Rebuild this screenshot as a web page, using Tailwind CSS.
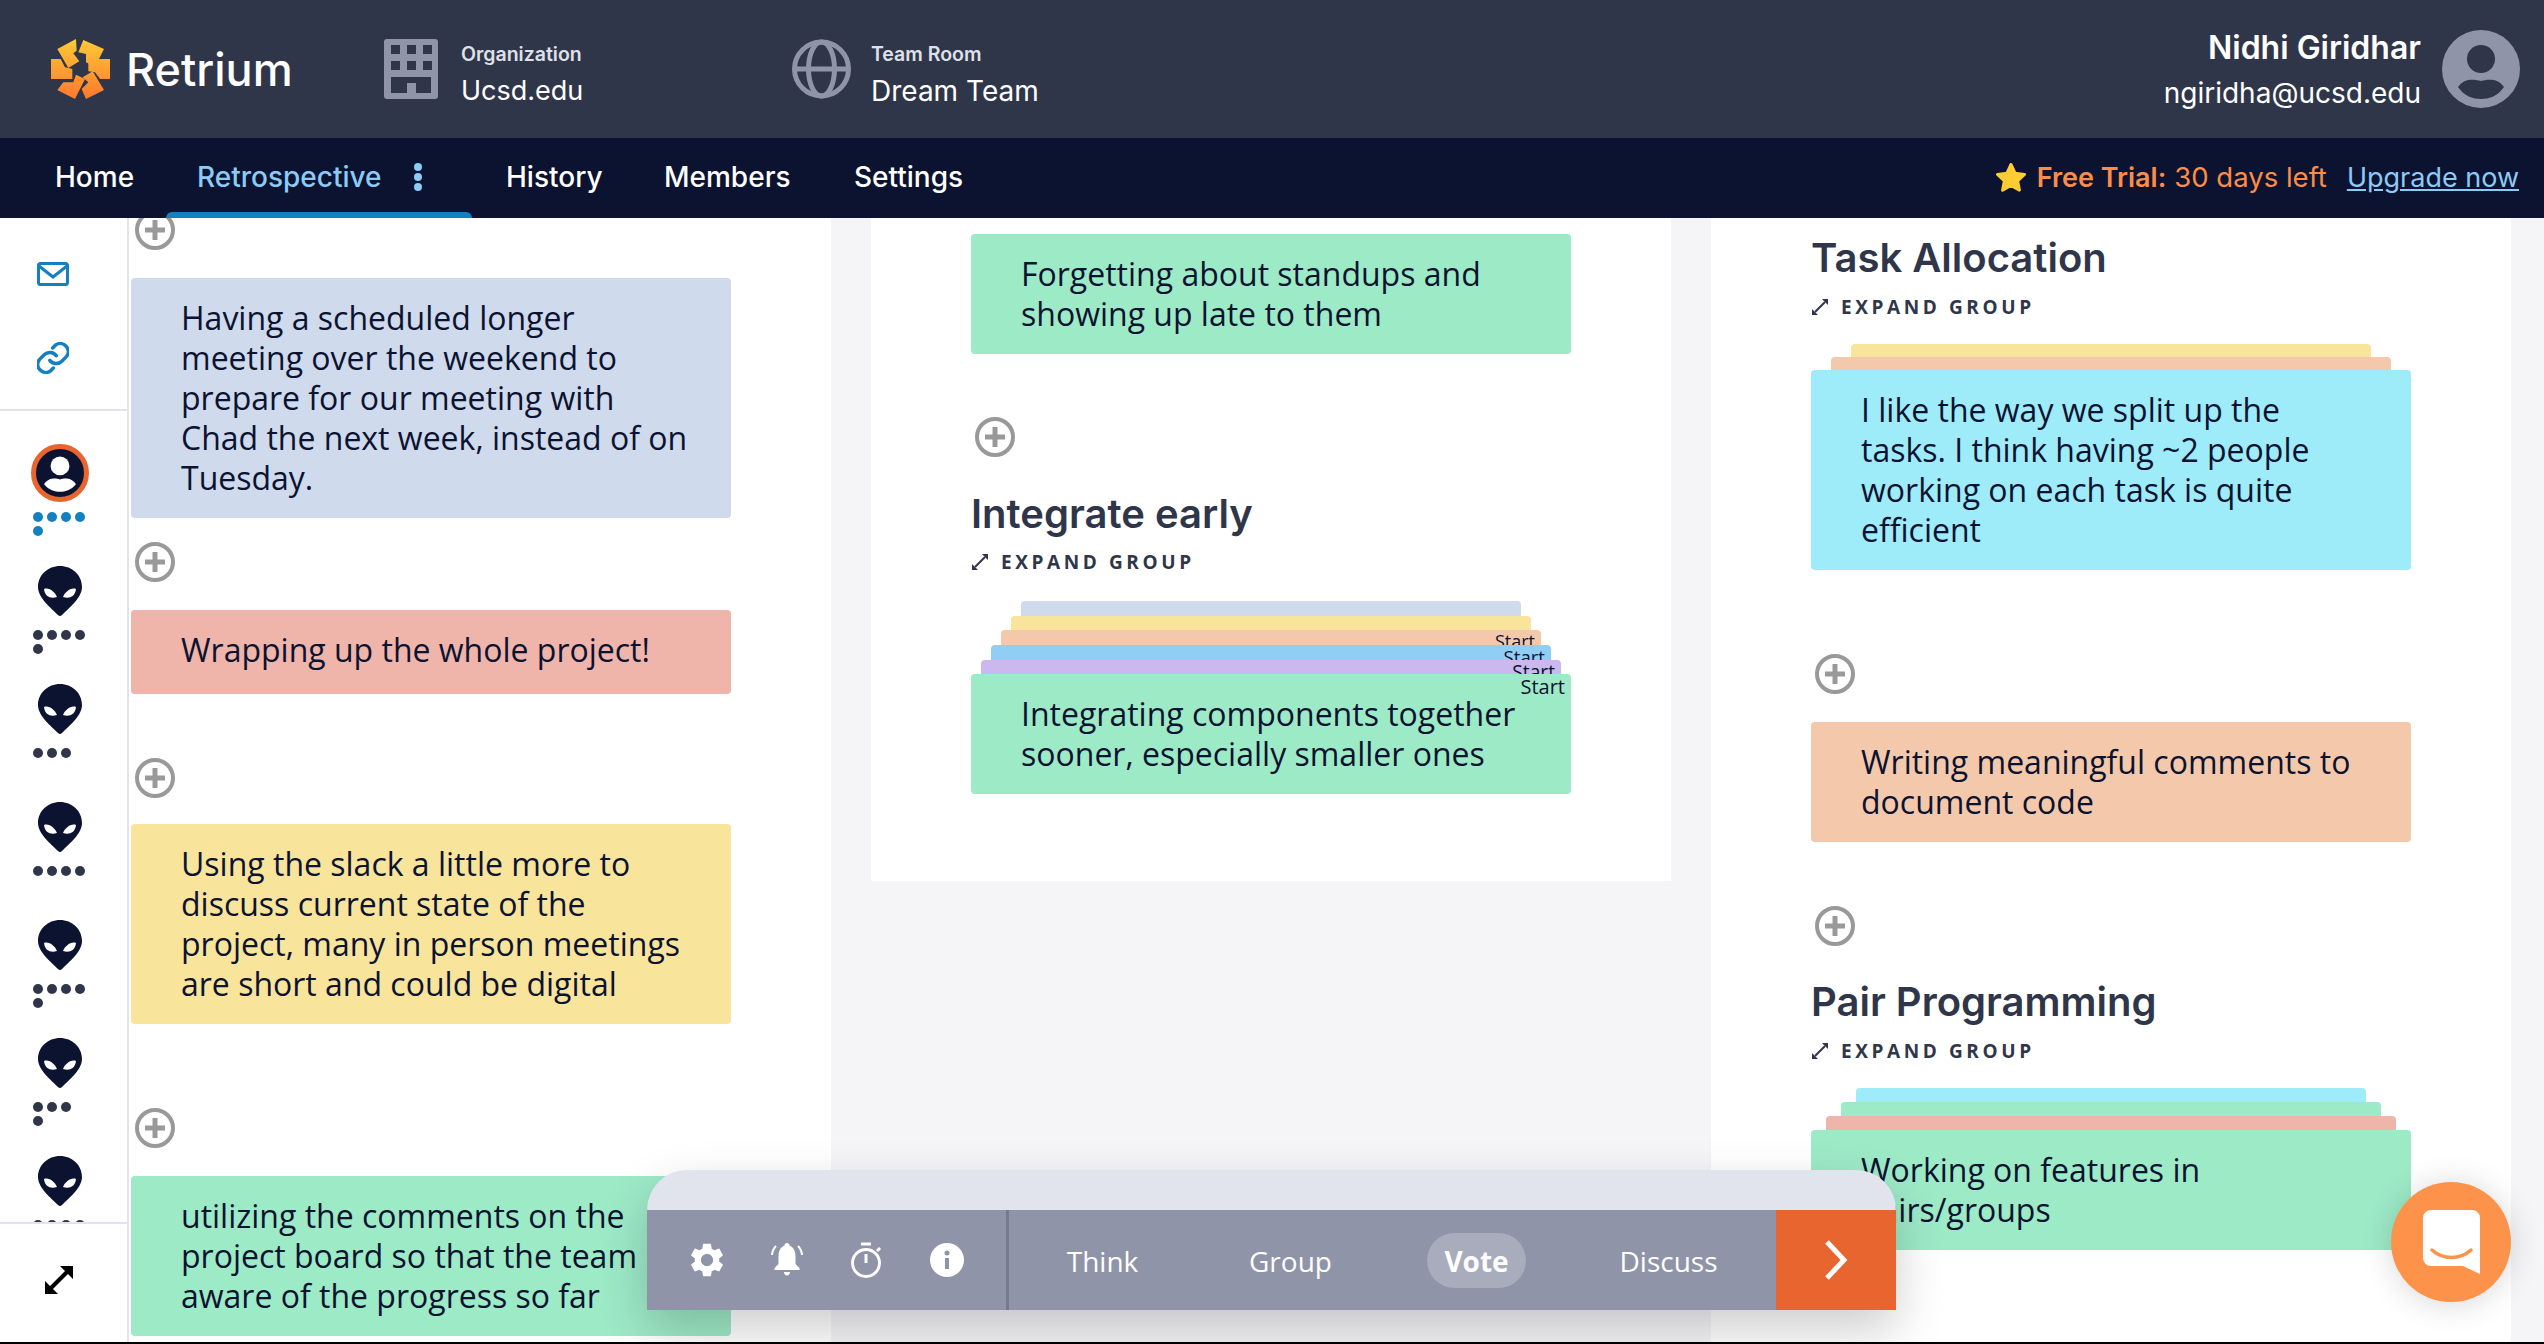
<!DOCTYPE html>
<html lang="en">
<head>
  <meta charset="UTF-8"/>
  <title>Retrium</title>
  <script src="https://cdn.jsdelivr.net/npm/@tailwindcss/browser@4"></script>
</head>
<body class="relative h-screen overflow-hidden bg-[#f5f5f8] font-['Open_Sans',sans-serif] text-[#0c1330]">

  <svg class="hidden">
    <symbol id="alien" viewBox="0 0 44 50">
      <path fill="#0c1330" d="M22 0C34 0 44 9 44 21C44 32 31 42 24 49Q22 51 20 49C13 42 0 32 0 21C0 9 10 0 22 0Z"/>
      <path fill="#fff" d="M6 23C11 21 17 26 19 31C13 33 7 31 6 23ZM38 23C33 21 27 26 25 31C31 33 37 31 38 23Z"/>
    </symbol>
    <symbol id="plus" viewBox="0 0 40 40">
      <circle cx="20" cy="20" r="18" fill="none" stroke="#999" stroke-width="4"/>
      <path fill="none" stroke="#999" stroke-width="5" d="M10 20H30M20 10V30"/>
    </symbol>
    <symbol id="expand" viewBox="0 0 18 18">
      <path fill="none" stroke="#30364a" stroke-width="2" d="M4 14L14 4"/>
      <path fill="#30364a" d="M11 1H17V7ZM1 11V17H7Z"/>
    </symbol>
  </svg>

  <!-- Top bar -->
  <header class="flex h-[138px] items-center bg-[#30364a] pl-[51px] pr-[24px] text-white">
    <div class="flex w-[333px] items-center gap-[16px]">
      <svg class="h-[60px] w-[59px]" viewBox="33 25 177 180">
        <defs>
          <linearGradient id="logoGrad" gradientUnits="userSpaceOnUse" x1="0" y1="25" x2="0" y2="205">
            <stop offset="0" stop-color="#ffca36"/>
            <stop offset="1" stop-color="#fd782e"/>
          </linearGradient>
        </defs>
        <g fill="url(#logoGrad)">
          <path d="M52 55L108 25L110 60L100 68L118 92L85 112Z"/>
          <path d="M130 28L192 55L165 108L138 95L138 70L115 65Z"/>
          <path d="M145 85H210V145H180L165 125L145 122Z"/>
          <path d="M158 122L192 178L138 205L125 175L145 155L128 140Z"/>
          <path d="M108 132L135 145L105 205L52 178L70 155L100 155Z"/>
          <path d="M33 85H62L75 110L97 115V145H33Z"/>
        </g>
      </svg>
      <span class="font-['Inter',sans-serif] text-[45px] leading-none font-medium">Retrium</span>
    </div>

    <div class="flex w-[408px] items-center gap-[23px]">
      <svg class="h-[60px] w-[54px]" viewBox="0 0 54 60">
        <rect width="54" height="60" rx="3" fill="#8f94a8"/>
        <path fill="#30364a" d="M7 6H16V15H7ZM23 6H32V15H23ZM39 6H48V15H39ZM7 22H16V31H7ZM23 22H32V31H23ZM39 22H48V31H39ZM7 38H47V54H32V44H23V54H7Z"/>
      </svg>
      <div class="mt-[13px] font-['Inter',sans-serif]">
        <div class="text-[19.5px] leading-[24px] font-semibold text-[#dfe1e8]">Organization</div>
        <div class="mt-[7px] text-[27px] leading-[36px]">Ucsd.edu</div>
      </div>
    </div>

    <div class="flex items-center gap-[20px]">
      <svg class="h-[60px] w-[59px]" viewBox="0 0 59 60" fill="none" stroke="#8f94a8" stroke-width="5">
        <circle cx="29.5" cy="30" r="27"/>
        <ellipse cx="29.5" cy="30" rx="13" ry="27"/>
        <path d="M3 30H56"/>
      </svg>
      <div class="mt-[13px] font-['Inter',sans-serif]">
        <div class="text-[19.5px] leading-[24px] font-semibold text-[#dfe1e8]">Team Room</div>
        <div class="mt-[7px] text-[28px] leading-[36px]">Dream Team</div>
      </div>
    </div>

    <div class="ml-auto flex items-center gap-[21px] font-['Inter',sans-serif]">
      <div class="mt-[3px] text-right">
        <div class="text-[32px] leading-[40px] font-semibold">Nidhi Giridhar</div>
        <div class="mt-[5px] text-[28px] leading-[40px]">ngiridha@ucsd.edu</div>
      </div>
      <svg class="h-[78px] w-[78px]" viewBox="0 0 78 78">
        <circle cx="39" cy="39" r="39" fill="#8f94a8"/>
        <ellipse cx="39" cy="29" rx="14" ry="14" fill="#30364a"/>
        <path fill="#30364a" d="M16 57C22 48 32 49 39 51C46 49 56 48 62 57C56 66 47 69 39 69C31 69 22 66 16 57Z"/>
      </svg>
    </div>
  </header>

  <!-- Nav -->
  <nav class="flex h-[80px] items-center bg-[#0c1330] pl-[55px] pr-[25px] font-['Inter',sans-serif] text-[28px] font-medium text-white">
    <a class="mb-[3px] w-[142px]">Home</a>
    <div class="relative flex h-full w-[309px] items-center text-[#8ccbf5]">
      <span class="mb-[3px]">Retrospective</span>
      <svg class="mb-[3px] ml-[31px] h-[30px] w-[10px]" viewBox="0 0 10 30" fill="#8ccbf5">
        <circle cx="5" cy="5" r="4"/><circle cx="5" cy="15" r="4"/><circle cx="5" cy="25" r="4"/>
      </svg>
      <div class="absolute bottom-0 left-[-31px] h-[6px] w-[306px] rounded-t-[6px] bg-[#1580c0]"></div>
    </div>
    <a class="mb-[3px] w-[158px]">History</a>
    <a class="mb-[3px] w-[190px]">Members</a>
    <a class="mb-[3px]">Settings</a>
    <div class="ml-auto flex items-center text-[27.5px] text-[#fd8d46]">
      <svg class="mr-[11px] h-[30px] w-[30px]" viewBox="2 2 20 20"><path fill="#ffcc33" stroke="#ffcc33" stroke-width="2" stroke-linejoin="round" d="M12 3l2.7 5.8 6.3.8-4.6 4.3 1.2 6.2L12 17l-5.6 3.1 1.2-6.2L3 9.6l6.3-.8z"/></svg>
      <span class="text-[27px] font-semibold">Free Trial:</span>
      <span class="ml-[8px] font-normal">30 days left</span>
      <a class="ml-[20px] text-[27px] font-normal text-[#8ccbf5] underline">Upgrade now</a>
    </div>
  </nav>

  <main class="flex h-[1124px]">
    <!-- Left rail -->
    <aside class="flex h-[1124px] w-[129px] flex-none flex-col border-r-2 border-[#e1e4ec] bg-white">
      <div class="flex h-[193px] flex-none flex-col border-b-2 border-[#e1e4ec] pl-[37px] pt-[44px]">
        <svg class="h-[24px] w-[32px]" viewBox="0 0 32 24" fill="none" stroke="#1580c0" stroke-width="3">
          <rect x="1.5" y="1.5" width="29" height="21" rx="2"/>
          <path d="M2 4L16 15L30 4"/>
        </svg>
        <svg class="mt-[56px] h-[32px] w-[32px]" viewBox="2 2 20 20" fill="none" stroke="#1580c0" stroke-width="2.2" stroke-linecap="round">
          <path d="M10 13.5a5 5 0 0 0 7.5.5l3-3a5 5 0 0 0-7-7l-1.7 1.7"/>
          <path d="M14 10.5a5 5 0 0 0-7.5-.5l-3 3a5 5 0 0 0 7 7l1.7-1.7"/>
        </svg>
      </div>

      <div class="min-h-0 flex-1 overflow-hidden pt-[33px]">
        <div class="h-[122px] pl-[31px]">
          <div class="h-[58px] w-[58px] rounded-full border-[5px] border-[#e9652f] bg-[#0c1330] p-[1px]">
            <svg class="h-full w-full" viewBox="0 0 78 78">
              <ellipse cx="39" cy="27" rx="16" ry="16" fill="#fff"/>
              <path fill="#fff" d="M12 58C20 46 32 48 39 50C46 48 58 46 66 58C58 68 47 71 39 71C31 71 20 68 12 58Z"/>
            </svg>
          </div>
          <div class="ml-[2px] mt-[10px] flex w-[56px] flex-wrap gap-[4px]">
            <i class="h-[10px] w-[10px] rounded-full bg-[#1580c0]"></i><i class="h-[10px] w-[10px] rounded-full bg-[#1580c0]"></i><i class="h-[10px] w-[10px] rounded-full bg-[#1580c0]"></i><i class="h-[10px] w-[10px] rounded-full bg-[#1580c0]"></i><i class="h-[10px] w-[10px] rounded-full bg-[#1580c0]"></i>
          </div>
        </div>

        <div class="h-[118px] pl-[33px]">
          <svg class="ml-[5px] h-[50px] w-[44px]"><use href="#alien"/></svg>
          <div class="mt-[14px] flex w-[56px] flex-wrap gap-[4px]">
            <i class="h-[10px] w-[10px] rounded-full bg-[#30364a]"></i><i class="h-[10px] w-[10px] rounded-full bg-[#30364a]"></i><i class="h-[10px] w-[10px] rounded-full bg-[#30364a]"></i><i class="h-[10px] w-[10px] rounded-full bg-[#30364a]"></i><i class="h-[10px] w-[10px] rounded-full bg-[#30364a]"></i>
          </div>
        </div>
        <div class="h-[118px] pl-[33px]">
          <svg class="ml-[5px] h-[50px] w-[44px]"><use href="#alien"/></svg>
          <div class="mt-[14px] flex w-[56px] flex-wrap gap-[4px]">
            <i class="h-[10px] w-[10px] rounded-full bg-[#30364a]"></i><i class="h-[10px] w-[10px] rounded-full bg-[#30364a]"></i><i class="h-[10px] w-[10px] rounded-full bg-[#30364a]"></i>
          </div>
        </div>
        <div class="h-[118px] pl-[33px]">
          <svg class="ml-[5px] h-[50px] w-[44px]"><use href="#alien"/></svg>
          <div class="mt-[14px] flex w-[56px] flex-wrap gap-[4px]">
            <i class="h-[10px] w-[10px] rounded-full bg-[#30364a]"></i><i class="h-[10px] w-[10px] rounded-full bg-[#30364a]"></i><i class="h-[10px] w-[10px] rounded-full bg-[#30364a]"></i><i class="h-[10px] w-[10px] rounded-full bg-[#30364a]"></i>
          </div>
        </div>
        <div class="h-[118px] pl-[33px]">
          <svg class="ml-[5px] h-[50px] w-[44px]"><use href="#alien"/></svg>
          <div class="mt-[14px] flex w-[56px] flex-wrap gap-[4px]">
            <i class="h-[10px] w-[10px] rounded-full bg-[#30364a]"></i><i class="h-[10px] w-[10px] rounded-full bg-[#30364a]"></i><i class="h-[10px] w-[10px] rounded-full bg-[#30364a]"></i><i class="h-[10px] w-[10px] rounded-full bg-[#30364a]"></i><i class="h-[10px] w-[10px] rounded-full bg-[#30364a]"></i>
          </div>
        </div>
        <div class="h-[118px] pl-[33px]">
          <svg class="ml-[5px] h-[50px] w-[44px]"><use href="#alien"/></svg>
          <div class="mt-[14px] flex w-[42px] flex-wrap gap-[4px]">
            <i class="h-[10px] w-[10px] rounded-full bg-[#30364a]"></i><i class="h-[10px] w-[10px] rounded-full bg-[#30364a]"></i><i class="h-[10px] w-[10px] rounded-full bg-[#30364a]"></i><i class="h-[10px] w-[10px] rounded-full bg-[#30364a]"></i>
          </div>
        </div>
        <div class="h-[118px] pl-[33px]">
          <svg class="ml-[5px] h-[50px] w-[44px]"><use href="#alien"/></svg>
          <div class="mt-[14px] flex w-[56px] flex-wrap gap-[4px]">
            <i class="h-[10px] w-[10px] rounded-full bg-[#30364a]"></i><i class="h-[10px] w-[10px] rounded-full bg-[#30364a]"></i><i class="h-[10px] w-[10px] rounded-full bg-[#30364a]"></i><i class="h-[10px] w-[10px] rounded-full bg-[#30364a]"></i>
          </div>
        </div>
      </div>

      <div class="flex h-[120px] flex-none items-start border-t-2 border-[#e1e4ec] pl-[45px] pt-[42px]">
        <svg class="h-[28px] w-[28px]" viewBox="0 0 28 28">
          <path fill="none" stroke="#000" stroke-width="4" d="M6 22L22 6"/>
          <path fill="#000" d="M15 0H28V13ZM0 15V28H13Z"/>
        </svg>
      </div>
    </aside>

    <!-- Column 1 -->
    <section class="h-[1124px] w-[702px] flex-none overflow-hidden bg-white pl-[2px] pt-0 text-[32px] leading-[40px]">
      <svg class="ml-[4px] mt-[-8px] block h-[40px] w-[40px]"><use href="#plus"/></svg>
      <div class="mt-[28px] w-[600px] rounded-[4px] bg-[#cfdaed] py-[20px] pl-[50px] pr-[38px]">Having a scheduled longer meeting over the weekend to prepare for our meeting with Chad the next week, instead of on Tuesday.</div>
      <svg class="ml-[4px] mt-[24px] block h-[40px] w-[40px]"><use href="#plus"/></svg>
      <div class="mt-[28px] h-[84px] w-[600px] rounded-[4px] bg-[#efb4aa] px-[50px] py-[20px]">Wrapping up the whole project!</div>
      <svg class="ml-[4px] mt-[64px] block h-[40px] w-[40px]"><use href="#plus"/></svg>
      <div class="mt-[26px] w-[600px] rounded-[4px] bg-[#f9e49c] px-[50px] py-[20px]">Using the slack a little more to discuss current state of the project, many in person meetings are short and could be digital</div>
      <svg class="ml-[4px] mt-[84px] block h-[40px] w-[40px]"><use href="#plus"/></svg>
      <div class="mt-[28px] w-[600px] rounded-[4px] bg-[#9deac7] px-[50px] py-[20px]">utilizing the comments on the project board so that the team aware of the progress so far</div>
    </section>

    <!-- Column 2 -->
    <section class="ml-[40px] h-[663px] w-[800px] flex-none bg-white pl-[100px] pt-[16px] text-[32px] leading-[40px]">
      <div class="w-[600px] rounded-[4px] bg-[#9deac7] px-[50px] py-[20px]">Forgetting about standups and showing up late to them</div>
      <svg class="ml-[4px] mt-[63px] block h-[40px] w-[40px]"><use href="#plus"/></svg>
      <h2 class="mt-[33px] font-['Inter',sans-serif] text-[40px] leading-[48px] font-semibold text-[#30364a]">Integrate early</h2>
      <div class="mt-[12px] flex h-[24px] items-center gap-[12px] text-[19px] font-bold tracking-[3.6px] text-[#30364a]">
        <svg class="h-[18px] w-[18px]"><use href="#expand"/></svg>EXPAND GROUP
      </div>
      <div class="mt-[27px] w-[600px]">
        <div class="mx-[50px] h-[15px] overflow-hidden rounded-t-[4px] bg-[#cfdaed]"></div>
        <div class="mx-[40px] h-[14px] overflow-hidden rounded-t-[4px] bg-[#f9e49c]"></div>
        <div class="mx-[30px] h-[15px] overflow-hidden rounded-t-[4px] bg-[#f4c9ab] pr-[6px] text-right text-[18px] leading-[23px]">Start</div>
        <div class="mx-[20px] h-[15px] overflow-hidden rounded-t-[4px] bg-[#90cef5] pr-[6px] text-right text-[18.6px] leading-[24px]">Start</div>
        <div class="mx-[10px] h-[14px] overflow-hidden rounded-t-[4px] bg-[#cbb8ee] pr-[6px] text-right text-[19.2px] leading-[24px]">Start</div>
        <div class="relative rounded-[4px] bg-[#9deac7] px-[50px] py-[20px]">
          <span class="absolute right-[6px] top-0 text-[20px] leading-[26px]">Start</span>
          Integrating components together sooner, especially smaller ones
        </div>
      </div>
    </section>

    <!-- Column 3 -->
    <section class="ml-[40px] h-[1124px] w-[800px] flex-none overflow-hidden bg-white pl-[100px] pt-[16px] text-[32px] leading-[40px]">
      <h2 class="font-['Inter',sans-serif] text-[40px] leading-[48px] font-semibold text-[#30364a]">Task Allocation</h2>
      <div class="mt-[13px] flex h-[24px] items-center gap-[12px] text-[19px] font-bold tracking-[3.6px] text-[#30364a]">
        <svg class="h-[18px] w-[18px]"><use href="#expand"/></svg>EXPAND GROUP
      </div>
      <div class="mt-[25px] w-[600px]">
        <div class="mx-[40px] h-[13px] rounded-t-[4px] bg-[#f9e49c]"></div>
        <div class="mx-[20px] h-[13px] rounded-t-[4px] bg-[#f4c9ab]"></div>
        <div class="rounded-[4px] bg-[#9eebf9] px-[50px] py-[20px]">I like the way we split up the tasks. I think having ~2 people working on each task is quite efficient</div>
      </div>
      <svg class="ml-[4px] mt-[84px] block h-[40px] w-[40px]"><use href="#plus"/></svg>
      <div class="mt-[28px] w-[600px] rounded-[4px] bg-[#f4c9ab] px-[50px] py-[20px]">Writing meaningful comments to document code</div>
      <svg class="ml-[4px] mt-[64px] block h-[40px] w-[40px]"><use href="#plus"/></svg>
      <h2 class="mt-[32px] font-['Inter',sans-serif] text-[40px] leading-[48px] font-semibold text-[#30364a]">Pair Programming</h2>
      <div class="mt-[13px] flex h-[24px] items-center gap-[12px] text-[19px] font-bold tracking-[3.6px] text-[#30364a]">
        <svg class="h-[18px] w-[18px]"><use href="#expand"/></svg>EXPAND GROUP
      </div>
      <div class="mt-[25px] w-[600px]">
        <div class="mx-[45px] h-[14px] rounded-t-[4px] bg-[#9eebf9]"></div>
        <div class="mx-[30px] h-[14px] rounded-t-[4px] bg-[#9deac7]"></div>
        <div class="mx-[15px] h-[14px] rounded-t-[4px] bg-[#efb4aa]"></div>
        <div class="rounded-[4px] bg-[#9deac7] px-[50px] py-[20px]">Working on features in pairs/groups</div>
      </div>
    </section>
  </main>

  <!-- Floating stage bar -->
  <div class="absolute left-[647px] top-[1170px] w-[1249px] rounded-t-[40px] bg-[#e1e4ec] pt-[40px] shadow-[0_20px_50px_rgba(0,0,0,0.2)]">
    <div class="flex h-[100px] items-center bg-[#8f94a8] text-[28px] text-white">
      <div class="flex h-full w-[362px] items-center gap-[46px] border-r-[3px] border-[#767b92] pl-[43px]">
        <svg class="h-[40px] w-[34px]" viewBox="2 1 20 22" fill="#fff"><path d="M19.14 12.94c.04-.3.06-.61.06-.94 0-.32-.02-.64-.07-.94l2.03-1.58c.18-.14.23-.41.12-.61l-1.92-3.32c-.12-.22-.37-.29-.59-.22l-2.39.96c-.5-.38-1.03-.7-1.62-.94l-.36-2.54c-.04-.24-.24-.41-.48-.41h-3.84c-.24 0-.43.17-.47.41l-.36 2.54c-.59.24-1.13.57-1.62.94l-2.39-.96c-.22-.08-.47 0-.59.22L2.74 8.87c-.12.21-.08.47.12.61l2.03 1.58c-.05.3-.09.63-.09.94s.02.64.07.94l-2.03 1.58c-.18.14-.23.41-.12.61l1.92 3.32c.12.22.37.29.59.22l2.39-.96c.5.38 1.03.7 1.62.94l.36 2.54c.05.24.24.41.48.41h3.84c.24 0 .44-.17.47-.41l.36-2.54c.59-.24 1.13-.56 1.62-.94l2.39.96c.22.08.47 0 .59-.22l1.92-3.32c.12-.22.07-.47-.12-.61l-2.01-1.58zM12 15.6c-1.98 0-3.6-1.62-3.6-3.6s1.62-3.6 3.6-3.6 3.6 1.62 3.6 3.6-1.62 3.6-3.6 3.6z"/></svg>
        <svg class="h-[36px] w-[34px]" viewBox="0 0 34 36">
          <path fill="#fff" d="M17 1c1.5 0 2.5 1 2.6 2.4C23.5 5 25.5 9 25.5 14v8l4 4v2H4.500V26l4-4v-8c0-5 2-9 5.900-10.600C14.500 2 15.500 1 17 1z"/>
          <path fill="#fff" d="M14 30h6c0 2-1.300 3.500-3 3.500s-3-1.500-3-3.500z"/>
          <path fill="none" stroke="#fff" stroke-width="2" d="M2 13C2.300 9.500 3.500 6.500 6 4M32 13C31.700 9.500 30.500 6.500 28 4"/>
        </svg>
        <svg class="h-[36px] w-[34px]" viewBox="0 0 34 36" fill="none" stroke="#fff" stroke-width="3">
          <circle cx="16" cy="21" r="13.500"/>
          <path d="M11 2H21M16 12V21M27 9L30 6"/>
        </svg>
        <svg class="h-[34px] w-[34px]" viewBox="0 0 34 34">
          <circle cx="17" cy="17" r="17" fill="#fff"/>
          <circle cx="17" cy="10" r="2.500" fill="#8f94a8"/>
          <rect x="15" y="15" width="4" height="11" fill="#8f94a8"/>
        </svg>
      </div>
      <div class="flex w-[187px] justify-center pt-[2px]">Think</div>
      <div class="flex w-[189px] justify-center pt-[2px]">Group</div>
      <div class="flex w-[189px] justify-center">
        <span class="mr-[6px] flex h-[55px] w-[99px] items-center justify-center rounded-full bg-[#a8acbc] pt-[2px] font-bold">Vote</span>
      </div>
      <div class="flex w-[189px] justify-center pt-[2px]">Discuss</div>
      <div class="ml-auto flex h-full w-[120px] items-center justify-center bg-[#e9652f]">
        <svg class="h-[40px] w-[26px]" viewBox="0 0 26 40" fill="none" stroke="#fff" stroke-width="5"><path d="M4 2L21 20L4 38"/></svg>
      </div>
    </div>
  </div>

  <!-- Chat launcher -->
  <div class="absolute left-[2391px] top-[1182px] flex h-[120px] w-[120px] items-center justify-center rounded-full bg-[#fd934a] shadow-[0_2px_32px_rgba(0,0,0,0.16)]">
    <svg class="h-[64px] w-[57px]" viewBox="0 0 57 64">
      <path fill="#fff" d="M8 0H49A8 8 0 0 1 57 8V64L40 56H8A8 8 0 0 1 0 48V8A8 8 0 0 1 8 0Z"/>
      <path fill="none" stroke="#fd934a" stroke-width="3.500" stroke-linecap="round" d="M9 40C20 50 37 50 48 40"/>
    </svg>
  </div>

  <div class="absolute bottom-0 left-0 h-[2px] w-full bg-black"></div>
</body>
</html>
